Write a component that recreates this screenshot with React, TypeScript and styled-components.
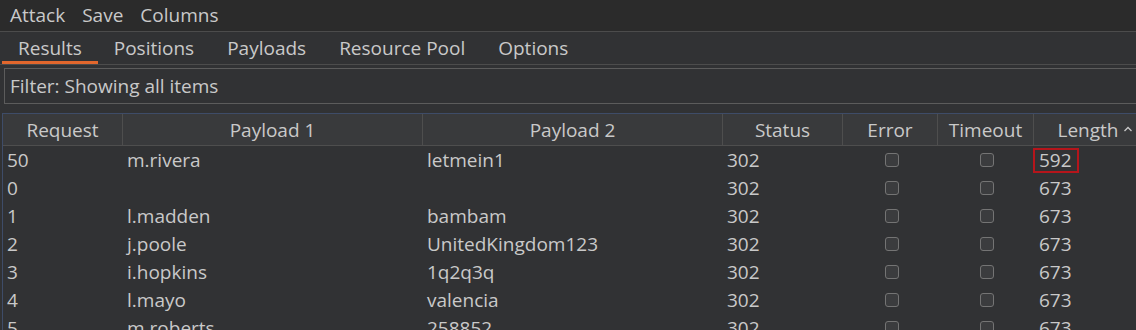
import React from "react";
import styled, { createGlobalStyle } from "styled-components";

const Global = createGlobalStyle`
  html, body { margin: 0; padding: 0; background: #313234; }
  body { font-family: "Open Sans", "Noto Sans", sans-serif; font-size: 19px; color: #c9c9c9; overflow: hidden; }
  * { box-sizing: border-box; }
`;

const Page = styled.div`
  width: 1136px;
  height: 330px;
  overflow: hidden;
  background: #313234;
  display: flex;
  flex-direction: column;
  & > * { flex-shrink: 0; }
`;

const MenuBar = styled.div`
  height: 32px;
  background: #2b2b2b;
  border-bottom: 1px solid #4c4c4c;
  display: flex;
  align-items: center;
  gap: 17px;
  padding-left: 10px;
`;

const MenuItem = styled.span`
  line-height: 1;
`;

const TabBar = styled.div`
  height: 33px;
  display: flex;
  padding-left: 2px;
  border-bottom: 1px solid #4c4c4c;
`;

const Tab = styled.div<{ $active?: boolean }>`
  padding: 2px 16px 0;
  display: flex;
  align-items: center;
  border-bottom: 3px solid ${(p) => (p.$active ? "#e2672d" : "transparent")};
  margin-right: ${(p) => (p.$active ? "0" : "1px")};
`;

const FilterBox = styled.div`
  margin: 3px 0 0 4px;
  height: 36px;
  border: 1px solid #5c5c5c;
  border-right: none;
  display: flex;
  align-items: center;
  padding-left: 5px;
`;

const Table = styled.div`
  margin: 9px 0 0 2px;
  border-top: 1px solid #3e4c68;
  border-left: 1px solid #3e4c68;
  display: flex;
  flex-direction: column;
`;

const COLS = "120px 300px 300px 120px 95px 96px 1fr";

const HeaderRow = styled.div`
  display: grid;
  grid-template-columns: ${COLS};
  height: 32px;
  background: #393a3c;
  border-bottom: 1px solid #4e4e4e;
  flex-shrink: 0;
`;

const HeaderCell = styled.div<{ $last?: boolean }>`
  display: flex;
  align-items: center;
  justify-content: center;
  border-right: ${(p) => (p.$last ? "none" : "1px solid #4e4e4e")};
  padding-top: 1px;
  padding-left: ${(p) => (p.$last ? "21px" : "0")};
`;

const Caret = styled.svg`
  margin-left: 5px;
  margin-top: -2px;
`;

const Row = styled.div`
  display: grid;
  grid-template-columns: ${COLS};
  height: 28px;
  flex-shrink: 0;
`;

const Cell = styled.div<{ $center?: boolean }>`
  display: flex;
  align-items: center;
  justify-content: ${(p) => (p.$center ? "center" : "flex-start")};
  padding-left: ${(p) => (p.$center ? "0" : "4px")};
  white-space: nowrap;
`;

const Check = styled.span`
  width: 14px;
  height: 14px;
  border: 1px solid #747474;
  border-radius: 3px;
  background: #3b3c3e;
  margin-top: -1px;
  margin-left: 2px;
`;

const Highlight = styled.span<{ $on?: boolean }>`
  border: 2px solid ${(p) => (p.$on ? "#b5151b" : "transparent")};
  padding: 0 5px 0 4px;
  margin-left: -5px;
  line-height: 21px;
`;

const headers = ["Request", "Payload 1", "Payload 2", "Status", "Error", "Timeout", "Length"];

const rows = [
  ["50", "m.rivera", "letmein1", "302", "592"],
  ["0", "", "", "302", "673"],
  ["1", "l.madden", "bambam", "302", "673"],
  ["2", "j.poole", "UnitedKingdom123", "302", "673"],
  ["3", "i.hopkins", "1q2q3q", "302", "673"],
  ["4", "l.mayo", "valencia", "302", "673"],
  ["5", "m.roberts", "258852", "302", "673"],
];

export default function App() {
  return (
    <Page>
      <Global />
      <MenuBar>
        <MenuItem>Attack</MenuItem>
        <MenuItem>Save</MenuItem>
        <MenuItem>Columns</MenuItem>
      </MenuBar>
      <TabBar>
        <Tab $active>Results</Tab>
        <Tab>Positions</Tab>
        <Tab>Payloads</Tab>
        <Tab>Resource Pool</Tab>
        <Tab>Options</Tab>
      </TabBar>
      <FilterBox>Filter: Showing all items</FilterBox>
      <Table>
        <HeaderRow>
          {headers.map((h, i) => (
            <HeaderCell key={h} $last={i === headers.length - 1}>
              {h}
              {h === "Length" && (
                <Caret width="10" height="8" viewBox="0 0 10 8">
                  <path d="M1.5 6 L5 2.5 L8.5 6" fill="none" stroke="#c9c9c9" strokeWidth="1.3" />
                </Caret>
              )}
            </HeaderCell>
          ))}
        </HeaderRow>
        {rows.map((r, i) => (
          <Row key={i}>
            <Cell>{r[0]}</Cell>
            <Cell>{r[1]}</Cell>
            <Cell>{r[2]}</Cell>
            <Cell>{r[3]}</Cell>
            <Cell $center><Check /></Cell>
            <Cell $center><Check /></Cell>
            <Cell><Highlight $on={i === 0}>{r[4]}</Highlight></Cell>
          </Row>
        ))}
      </Table>
    </Page>
  );
}
